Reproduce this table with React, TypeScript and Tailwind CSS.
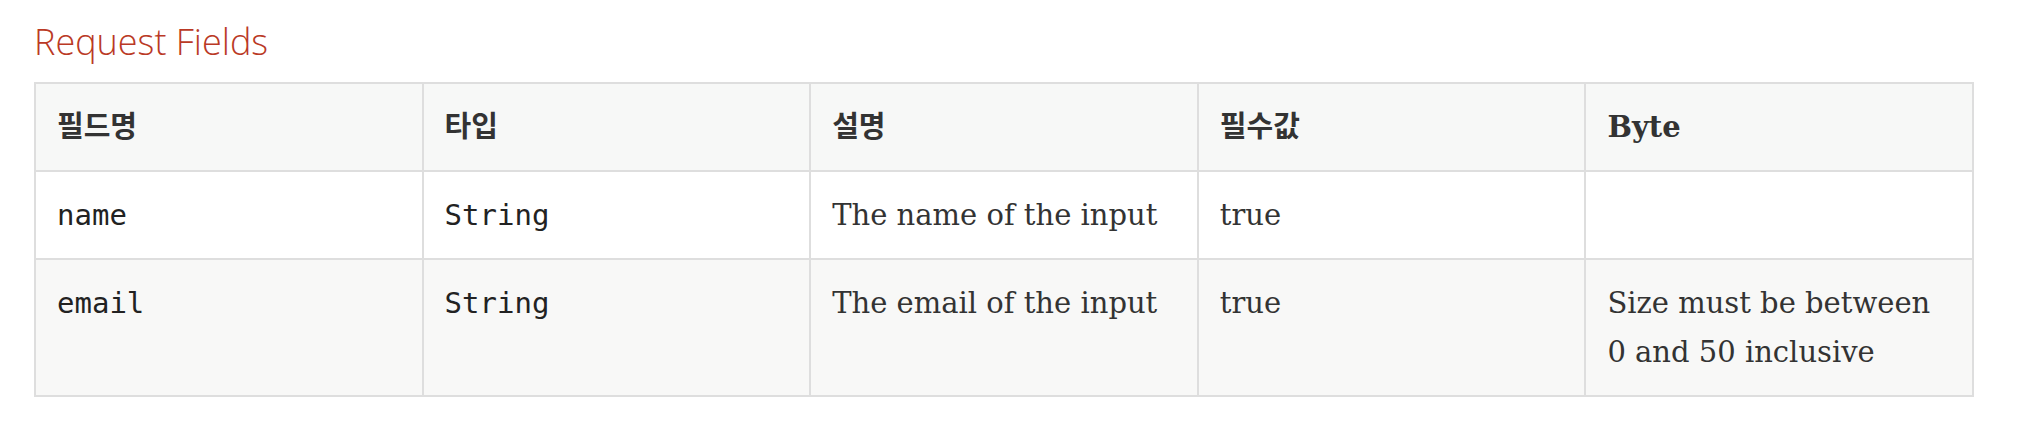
const rows = [
  { name: 'name', type: 'String', desc: 'The name of the input', required: 'true', bytes: '' },
  {
    name: 'email',
    type: 'String',
    desc: 'The email of the input',
    required: 'true',
    bytes: 'Size must be between 0 and 50 inclusive',
  },
];

const headers = ['필드명', '타입', '설명', '필수값', 'Byte'];

const serif = "font-['DejaVu_Serif','Noto_Sans_CJK_KR',serif]";
const cell = 'border-2 border-[#dedede] px-[21px] pt-[19px] pb-[18px] align-top text-left';

export default function App() {
  return (
    <div className="min-h-screen bg-white px-[34px] pt-[17px]">
      <div className="mb-[16px] font-['Open_Sans',sans-serif] text-[36px] font-light leading-[49px] text-[#ba3925]">
        Request Fields
      </div>

      <table className={`w-[1940px] table-fixed border-collapse ${serif} text-[29px] leading-[49px] text-[#333]`}>
        <thead>
          <tr className="bg-[#f7f8f7]">
            {headers.map((h) => (
              <th key={h} className={`${cell} font-bold`}>
                {h}
              </th>
            ))}
          </tr>
        </thead>
        <tbody>
          {rows.map((r, i) => (
            <tr key={r.name} className={i % 2 === 1 ? 'bg-[#f8f8f7]' : 'bg-white'}>
              <td className={cell}>
                <code className="font-['DejaVu_Sans_Mono',monospace] text-[29px] text-[#222]">{r.name}</code>
              </td>
              <td className={cell}>
                <code className="font-['DejaVu_Sans_Mono',monospace] text-[29px] text-[#222]">{r.type}</code>
              </td>
              <td className={cell}>{r.desc}</td>
              <td className={cell}>{r.required}</td>
              <td className={cell}>{r.bytes}</td>
            </tr>
          ))}
        </tbody>
      </table>
    </div>
  );
}
